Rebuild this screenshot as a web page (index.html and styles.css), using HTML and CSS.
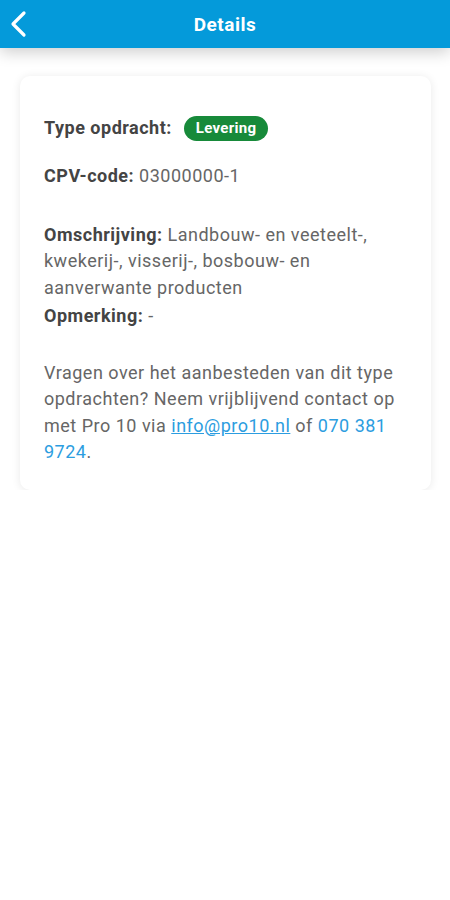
FILE: index.html
```html
<!DOCTYPE html>
<html>
<head>
  <title>Details</title>
  <link rel="stylesheet" href="styles.css">
</head>
<body>
  <div class="topbar">
    <a href="#" class="back">
      <svg width="24" height="28" viewBox="0 0 24 28"><path d="M17 3 L6 14 L17 25" fill="none" stroke="#fff" stroke-width="3.2" stroke-linecap="round" stroke-linejoin="round"/></svg>
    </a>
    <h1>Details</h1>
  </div>
  <div class="page">
    <div class="card">
      <div class="row type-row">
        <b>Type opdracht:</b>
        <span class="badge">Levering</span>
      </div>
      <div class="row cpv"><b>CPV-code:</b> 03000000-1</div>
      <div class="row desc"><b>Omschrijving:</b> Landbouw- en veeteelt-, kwekerij-, visserij-, bosbouw- en aanverwante producten</div>
      <div class="row note"><b>Opmerking:</b> -</div>
      <div class="row contact">Vragen over het aanbesteden van dit type opdrachten? Neem vrijblijvend contact op met Pro 10 via <a href="#" class="mail">info@pro10.nl</a> of <a href="#" class="phone">070 381 9724</a>.</div>
    </div>
  </div>
</body>
</html>
```
FILE: styles.css
```css
body {
  font-family: Roboto, "Noto Sans", sans-serif;
  background-color: #fff;
  color: #666;
  margin: 0;
  padding: 0;
}
.topbar {
  position: relative;
  height: 48px;
  background-color: #049ada;
  display: flex;
  align-items: center;
  justify-content: center;
  box-shadow: 0px 4px 16px rgba(0,0,0,0.2);
}
.back {
  position: absolute;
  left: 7px;
  top: 10px;
}
.topbar h1 {
  margin: 0;
  font-size: 19px;
  font-weight: 700;
  letter-spacing: 0.5px;
  color: #fff;
}
.page {
  padding: 28px 19px 0 20px;
}
.card {
  background-color: #fff;
  border-radius: 10px;
  padding: 39px 20px 24px 24px;
  box-shadow: 0px 1px 10px rgba(0,0,0,0.09);
  font-size: 18px;
  letter-spacing: 0.5px;
  line-height: 26.5px;
}
.row b {
  color: #444;
  font-weight: 700;
}
.type-row {
  display: flex;
  align-items: center;
  height: 26px;
}
.badge {
  margin-left: 12px;
  background-color: #178a3a;
  color: #fff;
  font-size: 15px;
  font-weight: 700;
  letter-spacing: 0.3px;
  line-height: 25px;
  padding: 0 12px;
  border-radius: 13px;
}
.cpv {
  margin-top: 22px;
}
.desc {
  margin-top: 32px;
}
.note {
  margin-top: 2px;
}
.contact {
  margin-top: 30px;
}
.mail {
  color: #2c9de0;
  text-decoration: underline;
}
.phone {
  color: #2c9de0;
  text-decoration: none;
}
```
